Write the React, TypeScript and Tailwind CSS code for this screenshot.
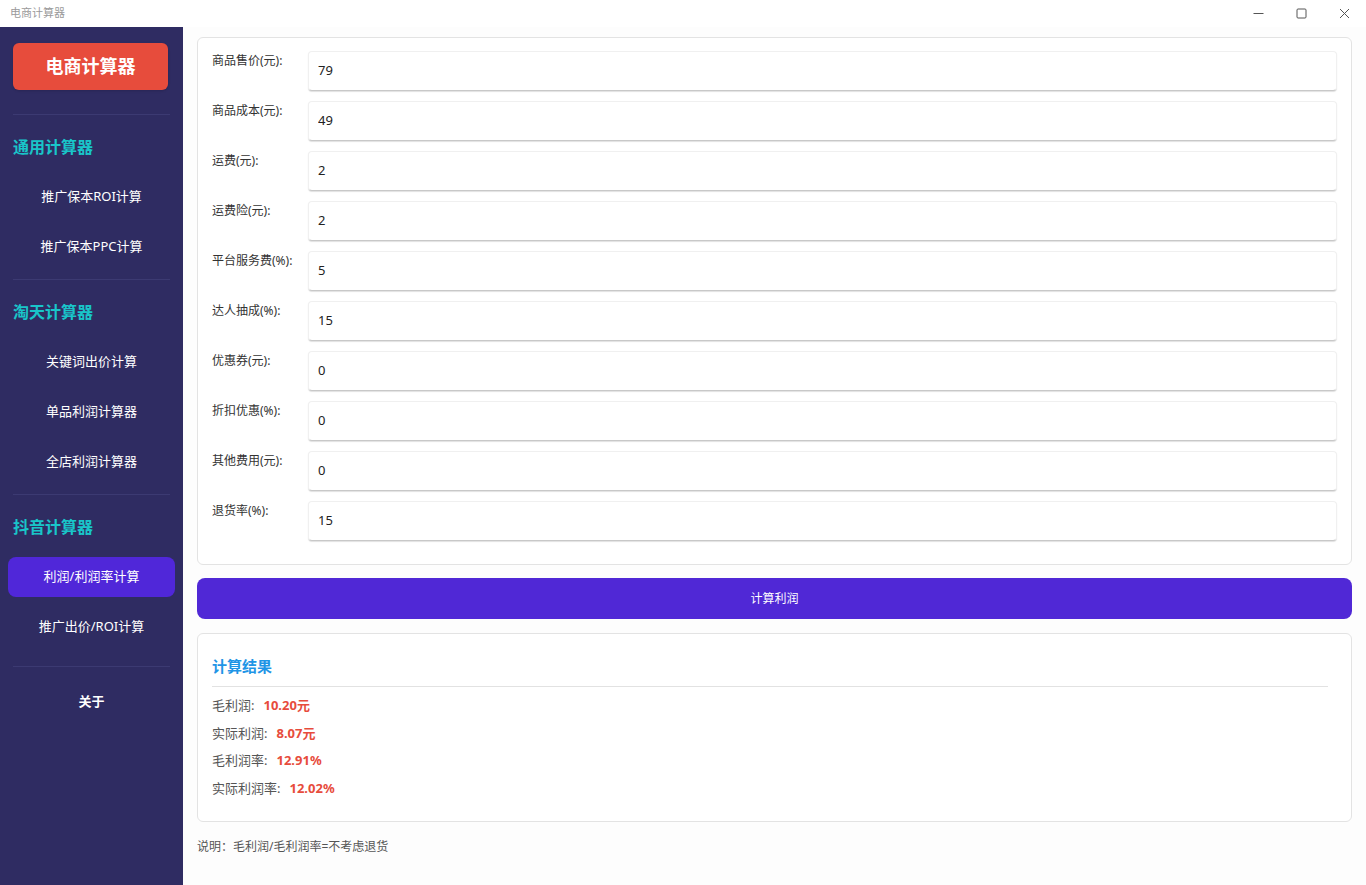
import React, { useState } from 'react';

interface Field {
  label: string;
  value: string;
}

const fields: Field[] = [
  { label: '商品售价(元):', value: '79' },
  { label: '商品成本(元):', value: '49' },
  { label: '运费(元):', value: '2' },
  { label: '运费险(元):', value: '2' },
  { label: '平台服务费(%):', value: '5' },
  { label: '达人抽成(%):', value: '15' },
  { label: '优惠券(元):', value: '0' },
  { label: '折扣优惠(%):', value: '0' },
  { label: '其他费用(元):', value: '0' },
  { label: '退货率(%):', value: '15' },
];

const groups = [
  { title: '通用计算器', items: ['推广保本ROI计算', '推广保本PPC计算'] },
  { title: '淘天计算器', items: ['关键词出价计算', '单品利润计算器', '全店利润计算器'] },
  { title: '抖音计算器', items: ['利润/利润率计算', '推广出价/ROI计算'] },
];

const results = [
  { label: '毛利润:', value: '10.20元' },
  { label: '实际利润:', value: '8.07元' },
  { label: '毛利润率:', value: '12.91%' },
  { label: '实际利润率:', value: '12.02%' },
];

const font = { fontFamily: '"Noto Sans", "Noto Sans CJK SC", sans-serif' };

const TitleBar: React.FC = () => (
  <div className="h-[27px] flex items-center justify-between bg-white shrink-0">
    <span className="pl-[10px] text-[11px] text-[#9a9a9a]">电商计算器</span>
    <div className="flex items-center h-full text-[#555]">
      <div className="w-[43px] h-full flex items-center justify-center">
        <svg width="11" height="11" viewBox="0 0 11 11">
          <path d="M0.5 5.5h10" stroke="currentColor" strokeWidth="1" />
        </svg>
      </div>
      <div className="w-[43px] h-full flex items-center justify-center">
        <svg width="11" height="11" viewBox="0 0 11 11">
          <rect x="1" y="1" width="9" height="9" rx="1" fill="none" stroke="currentColor" strokeWidth="1" />
        </svg>
      </div>
      <div className="w-[43px] h-full flex items-center justify-center">
        <svg width="11" height="11" viewBox="0 0 11 11">
          <path d="M1 1l9 9M10 1l-9 9" stroke="currentColor" strokeWidth="1" />
        </svg>
      </div>
    </div>
  </div>
);

const Divider: React.FC<{ className?: string }> = ({ className = '' }) => (
  <div className={`mx-[13px] h-px bg-[#3c3a72] ${className}`} />
);

const Sidebar: React.FC<{ active: string; onPick: (s: string) => void }> = ({ active, onPick }) => (
  <aside className="w-[183px] shrink-0 bg-[#2f2c62] flex flex-col pt-[16px]">
    <div className="mx-[13px] w-[155px] h-[47px] rounded-[6px] bg-[#e74c3c] flex items-center justify-center text-white text-[18px] font-bold shadow-sm">
      电商计算器
    </div>
    {groups.map((g, gi) => (
      <div key={g.title} className="flex flex-col">
        <Divider className={gi === 0 ? 'mt-[24px]' : 'mt-[12px]'} />
        <div className="px-[13px] mt-[21px] mb-[19px] text-[16px] font-bold text-[#19c5c9] leading-[22px]">
          {g.title}
        </div>
        <div className="flex flex-col gap-[10px]">
          {g.items.map((item) => (
            <button
              key={item}
              onClick={() => onPick(item)}
              className={`mx-[8px] h-[40px] rounded-[8px] text-[13px] text-white flex items-center justify-center ${
                active === item ? 'bg-[#5027d9]' : ''
              }`}
            >
              {item}
            </button>
          ))}
        </div>
      </div>
    ))}
    <Divider className="mt-[19px]" />
    <button className="mx-[8px] mt-[15px] h-[40px] text-[13px] font-semibold text-white flex items-center justify-center">
      关于
    </button>
  </aside>
);

export default function App() {
  const [active, setActive] = useState('利润/利润率计算');
  const [values, setValues] = useState(fields.map((f) => f.value));

  return (
    <div className="w-[1366px] h-[885px] flex flex-col bg-white overflow-hidden" style={font}>
      <TitleBar />
      <div className="flex flex-1 min-h-0">
        <Sidebar active={active} onPick={setActive} />
        <main className="flex-1 bg-[#fdfdfd] pl-[14px] pr-[14px] pt-[10px] flex flex-col">
          <div className="border border-[#e3e3e3] rounded-[6px] bg-white pt-[13px] pb-[23px] pl-[14px] pr-[14px] flex flex-col gap-[10px]">
            {fields.map((f, i) => (
              <div key={f.label} className="flex items-start">
                <label className="w-[96px] shrink-0 text-[12px] text-[#333] pt-[2px] leading-[16px]">{f.label}</label>
                <input
                  value={values[i]}
                  onChange={(e) => setValues(values.map((v, j) => (j === i ? e.target.value : v)))}
                  className="flex-1 h-[40px] rounded-[4px] bg-white border border-[#f0f0f0] border-b-[#c8c8c8] shadow-[0_1px_1px_rgba(0,0,0,0.12)] px-[9px] pb-[2px] text-[13px] text-[#222] outline-none"
                />
              </div>
            ))}
          </div>

          <button className="mt-[13px] h-[41px] rounded-[8px] bg-[#5028d6] text-white text-[12px]">计算利润</button>

          <div className="mt-[14px] h-[189px] border border-[#e3e3e3] rounded-[6px] bg-white px-[14px] pt-[22px]">
            <div className="text-[15px] font-bold text-[#1f95e6] leading-[20px] pb-[10px] border-b border-[#e2e2e2] mr-[9px]">
              计算结果
            </div>
            <div className="flex flex-col gap-[9.5px] mt-[9px]">
              {results.map((r) => (
                <div key={r.label} className="flex items-center text-[13px] leading-[18px]">
                  <span className="text-[#555]">{r.label}</span>
                  <span className="ml-[9px] font-bold text-[#e74c3c]">{r.value}</span>
                </div>
              ))}
            </div>
          </div>

          <p className="mt-[16px] text-[12px] text-[#555]">说明：毛利润/毛利润率=不考虑退货</p>
        </main>
      </div>
    </div>
  );
}
